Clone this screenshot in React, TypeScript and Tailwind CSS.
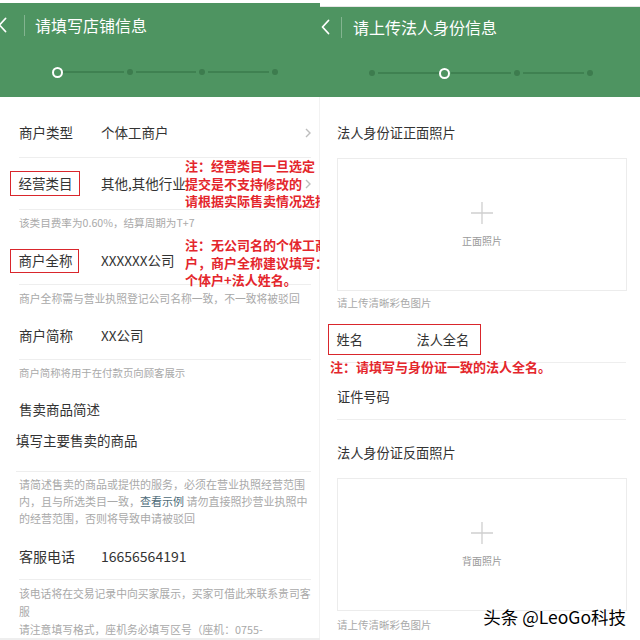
import React from 'react';

const FONT = { fontFamily: '"Noto Sans CJK SC", "Noto Sans", sans-serif' };

const Back: React.FC = () => (
  <svg width="9" height="16" viewBox="0 0 9 16" fill="none" stroke="white" strokeWidth={1.8}>
    <path d="M7.5 1.5 1.5 8l6 6.5" strokeLinecap="round" strokeLinejoin="round" />
  </svg>
);

const Steps: React.FC<{ active: number; className: string }> = ({ active, className }) => (
  <div className={`flex items-center w-[230px] ${className}`}>
    {[0, 1, 2, 3].map((i) => (
      <React.Fragment key={i}>
        {i > 0 && <div className="flex-1 h-[1.5px] bg-[#3f8151]" />}
        <div className="w-[12px] flex items-center justify-center">
          {i === active ? (
            <div className="w-[11px] h-[11px] rounded-full border-2 border-white" />
          ) : (
            <div className="w-[6px] h-[6px] rounded-full bg-[#3d7c4e]" />
          )}
        </div>
      </React.Fragment>
    ))}
  </div>
);

const Plus: React.FC = () => (
  <svg width="24" height="24" viewBox="0 0 24 24" stroke="#cfcfcf" strokeWidth={1.3}>
    <path d="M12 1v22M1 12h22" />
  </svg>
);

const Chevron: React.FC = () => (
  <svg width="6" height="10" viewBox="0 0 6 10" fill="none" stroke="#bdbdbd" strokeWidth={1.4}>
    <path d="M1 1l4 4-4 4" />
  </svg>
);

const Note: React.FC<{ lines: string[]; className: string }> = ({ lines, className }) => (
  <div className={`absolute text-[13px] leading-[17.5px] font-bold text-[#e4262c] whitespace-nowrap ${className}`}>
    {lines.map((l) => (
      <div key={l}>{l}</div>
    ))}
  </div>
);

const Boxed: React.FC<{ children: React.ReactNode; className?: string }> = ({ children, className = '' }) => (
  <div className={`-ml-[9px] pl-[7.5px] flex items-center border-[1.5px] border-[#d9262c] ${className}`}>
    {children}
  </div>
);

const UploadBox: React.FC<{ text: string }> = ({ text }) => (
  <div className="w-[290px] h-[133px] border border-[#ececec] flex flex-col items-center pt-[42px]">
    <Plus />
    <span className="mt-[9px] text-[10px] leading-[14px] text-[#9a9a9a]">{text}</span>
  </div>
);

const StoreInfo: React.FC = () => (
  <div className="relative w-[320px] h-[640px] overflow-hidden bg-white flex flex-col">
    <div className="h-[3px] shrink-0" />
    <div className="h-[94px] shrink-0 bg-[#4e9461] flex flex-col">
      <div className="h-[44px] flex items-center">
        <div className="w-[24px] -ml-[2px] pl-0"><Back /></div>
        <div className="w-px h-[21px] bg-white/30 ml-[2px]" />
        <span className="ml-[10px] text-[16px] text-white">请填写店铺信息</span>
      </div>
      <div className="h-[50px] flex items-center">
        <Steps active={0} className="ml-[51px]" />
      </div>
    </div>

    <div className="pl-[19px] pr-[8px] text-[#333] text-[13.5px] border-r border-[#f2f2f2] flex-1">
      <div className="h-[61px] pt-[11px] flex items-center border-b border-[#eeeeee]">
        <span className="w-[82px]">商户类型</span>
        <span className="flex-1">个体工商户</span>
        <Chevron />
      </div>
      <div className="h-[52px] flex items-center border-b border-[#eeeeee]">
        <div className="w-[82px]">
          <Boxed className="w-[70px] h-[25px]">经营类目</Boxed>
        </div>
        <span className="flex-1">其他,其他行业</span>
        <Chevron />
      </div>
      <div className="h-[27px] pt-[5px] text-[10.6px] leading-[16px] text-[#a9a9a9]">该类目费率为0.60%，结算周期为T+7</div>
      <div className="h-[48px] flex items-center border-b border-[#eeeeee]">
        <div className="w-[82px]">
          <Boxed className="w-[69px] h-[24px]">商户全称</Boxed>
        </div>
        <span>XXXXXX公司</span>
      </div>
      <div className="h-[26px] pt-[5px] text-[10.8px] leading-[16px] text-[#a9a9a9] whitespace-nowrap">
        商户全称需与营业执照登记公司名称一致，不一致将被驳回
      </div>
      <div className="h-[49px] flex items-center border-b border-[#eeeeee]">
        <span className="w-[82px]">商户简称</span>
        <span>XX公司</span>
      </div>
      <div className="h-[26px] pt-[5px] text-[10.4px] leading-[16px] text-[#a9a9a9]">商户简称将用于在付款页向顾客展示</div>
      <div className="h-[46px] flex items-center">售卖商品简述</div>
      <div className="h-[40px] -ml-[3px] pt-[-1px] leading-[16px] border-b border-[#eeeeee]">
        <span className="block ml-0">填写主要售卖的商品</span>
      </div>
      <div className="pt-[4px] text-[11px] leading-[17px] text-[#a9a9a9] h-[55px]">
        <div className="whitespace-nowrap">请简述售卖的商品或提供的服务，必须在营业执照经营范围</div>
        <div className="whitespace-nowrap">
          内，且与所选类目一致，<span className="text-[#4d6b78]">查看示例</span> 请勿直接照抄营业执照中
        </div>
        <div>的经营范围，否则将导致申请被驳回</div>
      </div>
      <div className="h-[53px] pt-[6px] flex items-center border-b border-[#eeeeee] text-[14px]">
        <span className="w-[82px]">客服电话</span>
        <span>16656564191</span>
      </div>
      <div className="pt-[4px] text-[10.8px] leading-[18px] text-[#a9a9a9]">
        <div className="whitespace-nowrap">该电话将在交易记录中向买家展示，买家可借此来联系贵司客</div>
        <div>服</div>
        <div className="whitespace-nowrap">请注意填写格式，座机务必填写区号（座机：0755-</div>
      </div>
    </div>
    <div className="h-[5px] shrink-0 bg-[#eeeeee]" />

    <Note className="left-[185px] top-[157px]" lines={['注：经营类目一旦选定', '提交是不支持修改的', '请根据实际售卖情况选择']} />
    <Note className="left-[185px] top-[236px]" lines={['注：无公司名的个体工商', '户，商户全称建议填写：', '个体户+法人姓名。']} />
  </div>
);

const IdInfo: React.FC = () => (
  <div className="relative w-[320px] h-[640px] overflow-hidden bg-white flex flex-col">
    <div className="h-[7px] shrink-0 border-b border-[#e6e6e6]" />
    <div className="h-[90px] shrink-0 bg-[#4e9461] flex flex-col overflow-hidden">
      <div className="h-[40px] shrink-0 flex items-center">
        <div className="w-[21px] pl-[1px]"><Back /></div>
        <div className="w-px h-[21px] bg-white/30" />
        <span className="ml-[11px] text-[16px] text-white">请上传法人身份信息</span>
      </div>
      <div className="h-[50px] shrink-0 pt-[2px] flex items-center">
        <Steps active={1} className="ml-[46px]" />
      </div>
    </div>

    <div className="pl-[17px] pr-[14px] text-[#333] text-[13.2px]">
      <div className="pt-[27px] leading-[18px]">法人身份证正面照片</div>
      <div className="mt-[16px]"><UploadBox text="正面照片" /></div>
      <div className="mt-[4px] text-[10.5px] leading-[16px] text-[#a9a9a9]">请上传清晰彩色图片</div>
      <Boxed className="mt-[13px] w-[153px] h-[31px]">
        <span className="w-[80px]">姓名</span>
        <span>法人全名</span>
      </Boxed>
      <div className="mt-[7px] border-t border-[#eeeeee]" />
      <div className="h-[57px] pt-[11px] flex items-center border-b border-[#eeeeee]">证件号码</div>
      <div className="pt-[24px] leading-[18px]">法人身份证反面照片</div>
      <div className="mt-[16px]"><UploadBox text="背面照片" /></div>
      <div className="mt-[6px] text-[10.5px] leading-[16px] text-[#a9a9a9]">请上传清晰彩色图片</div>
    </div>

    <Note className="left-[10px] top-[358px]" lines={['注：请填写与身份证一致的法人全名。']} />
    <div
      className="absolute right-[14px] top-[605px] text-[17.5px] leading-[24px] text-black whitespace-nowrap"
      style={{ textShadow: '0 0 2px #fff, 0 0 2px #fff, 0 0 2px #fff' }}
    >
      头条 @LeoGo科技
    </div>
  </div>
);

const App: React.FC = () => (
  <div className="w-[640px] h-[640px] flex bg-white overflow-hidden" style={FONT}>
    <StoreInfo />
    <IdInfo />
  </div>
);

export default App;
